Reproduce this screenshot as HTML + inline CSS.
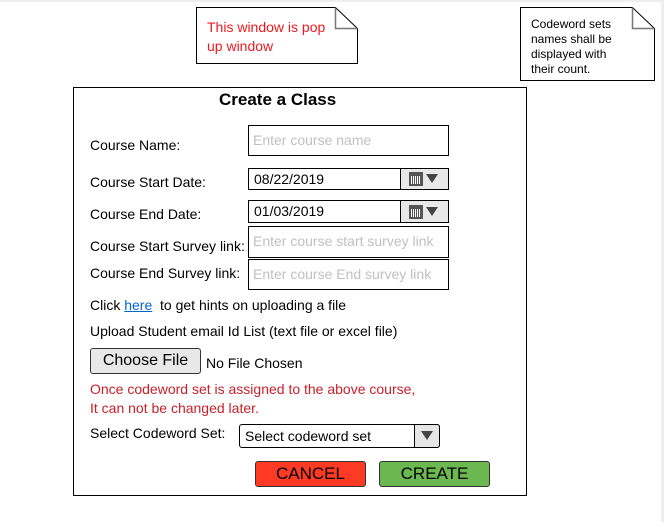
<!DOCTYPE html>
<html><head><style>
body{margin:0;width:664px;height:522px;background:#fff;position:relative;overflow:hidden;font-family:"Liberation Sans",Arial,sans-serif;font-size:14px;color:#000}
.a{position:absolute;white-space:nowrap}
.box{position:absolute;border:1px solid #000;box-sizing:border-box;background:#fff}
.ph{color:#c0c0c0;font-size:14px;padding-left:4px;line-height:28px}
.lbl{position:absolute;left:90px;font-size:14px}
</style></head><body>
<div style="position:absolute;left:0;top:0;width:664px;height:2px;background:#eee"></div>
<div style="position:absolute;right:0;top:0;width:3px;height:522px;background:#eee"></div>

<svg class="a" style="left:195px;top:6px" width="164" height="59"><path d="M1.5 1.5H140.5L162.5 22.5V57.5H1.5Z" fill="#fff" stroke="#000"/><path d="M140.5 1.5V22.5H162.5" fill="none" stroke="#777" stroke-width="1.5"/></svg>
<div class="a" style="left:207px;top:18px;color:#f0191e;font-size:14px;line-height:19px;white-space:normal;width:125px">This window is pop up window</div>

<svg class="a" style="left:519px;top:6px" width="137" height="76"><path d="M1.5 1.5H113.5L135.5 22.5V74.5H1.5Z" fill="#fff" stroke="#000"/><path d="M113.5 1.5V22.5H135.5" fill="none" stroke="#777" stroke-width="1.5"/></svg>
<div class="a" style="left:531px;top:17px;font-size:12px;line-height:15px;white-space:normal;width:90px">Codeword sets names shall be displayed with their count.</div>

<div class="box" style="left:73px;top:87px;width:454px;height:409px"></div>
<div class="a" style="left:219px;top:90px;font-size:17px;font-weight:bold">Create a Class</div>

<div class="lbl a" style="top:137px">Course Name:</div>
<div class="box ph" style="left:248px;top:125px;width:201px;height:31px;line-height:29px">Enter course name</div>

<div class="lbl a" style="top:174px">Course Start Date:</div>
<div class="box" style="left:248px;top:168px;width:201px;height:22px;line-height:20px;padding-left:5px">08/22/2019</div>
<div class="box" style="left:400px;top:168px;width:49px;height:22px;background:#e8e8e8"></div>
<div class="a" style="left:409px;top:172px;width:14px;height:14px;background:#555"><div style="margin:4px 2px;width:10px;height:8px;background:repeating-linear-gradient(90deg,#fff 0 1px,#555 1px 2px)"></div></div>
<svg class="a" style="left:426px;top:174px" width="12" height="10"><path d="M0 0H12L6 9Z" fill="#444"/></svg>

<div class="lbl a" style="top:206px">Course End Date:</div>
<div class="box" style="left:248px;top:200px;width:201px;height:23px;line-height:21px;padding-left:5px">01/03/2019</div>
<div class="box" style="left:400px;top:200px;width:49px;height:23px;background:#e8e8e8"></div>
<div class="a" style="left:409px;top:205px;width:14px;height:14px;background:#555"><div style="margin:4px 2px;width:10px;height:8px;background:repeating-linear-gradient(90deg,#fff 0 1px,#555 1px 2px)"></div></div>
<svg class="a" style="left:426px;top:207px" width="12" height="10"><path d="M0 0H12L6 9Z" fill="#444"/></svg>

<div class="lbl a" style="top:238px">Course Start Survey link:</div>
<div class="box ph" style="left:248px;top:226px;width:201px;height:32px">Enter course start survey link</div>
<div class="lbl a" style="top:265px">Course End Survey link:</div>
<div class="box ph" style="left:248px;top:259px;width:201px;height:31px">Enter course End survey link</div>

<div class="lbl a" style="top:297px">Click <span style="color:#0066cc;text-decoration:underline">here</span>&nbsp; to get hints on uploading a file</div>
<div class="lbl a" style="top:323px">Upload Student email Id List (text file or excel file)</div>

<div class="box" style="left:90px;top:348px;width:111px;height:26px;border-radius:3px;background:#e8e8e8;border-color:#333;font-size:16px;text-align:center;line-height:23px">Choose File</div>
<div class="a" style="left:206px;top:355px">No File Chosen</div>

<div class="lbl a" style="top:381px;color:#c8202a">Once codeword set is assigned to the above course,</div>
<div class="lbl a" style="top:400px;color:#c8202a">It can not be changed later.</div>

<div class="lbl a" style="top:425px">Select Codeword Set:</div>
<div class="box" style="left:239px;top:424px;width:201px;height:24px;border-radius:3px;line-height:22px;padding-left:5px">Select codeword set</div>
<div class="box" style="left:414px;top:424px;width:26px;height:24px;border-radius:0 3px 3px 0;background:#e6e6e6"></div>
<svg class="a" style="left:421px;top:431px" width="12" height="10"><path d="M0 0H12L6 9Z" fill="#444"/></svg>

<div class="box" style="left:255px;top:461px;width:111px;height:26px;border-radius:3px;background:#ff3a24;border-color:#333;font-size:17px;text-align:center;line-height:24px">CANCEL</div>
<div class="box" style="left:379px;top:461px;width:111px;height:26px;border-radius:3px;background:#6ab84f;border-color:#333;font-size:17px;text-align:center;line-height:24px">CREATE</div>
</body></html>
